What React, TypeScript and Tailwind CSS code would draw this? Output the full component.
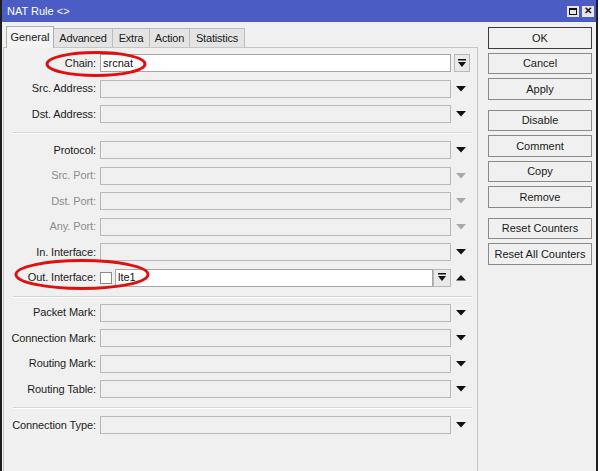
import React from "react";

const font = { fontFamily: '"Liberation Sans", Arial, sans-serif' };

type RowProps = {
  label: string;
  disabled?: boolean;
  value?: string;
  kind?: "plain" | "chain" | "out";
};

const DownArrow = ({ color = "#111" }: { color?: string }) => (
  <svg width="10" height="6" viewBox="0 0 10 6">
    <polygon points="0,0 10,0 5,5.5" fill={color} />
  </svg>
);

const UpArrow = () => (
  <svg width="10" height="6" viewBox="0 0 10 6">
    <polygon points="0,5.5 10,5.5 5,0" fill="#111" />
  </svg>
);

const PickIcon = () => (
  <svg width="8" height="9" viewBox="0 0 8 9">
    <rect x="0" y="0" width="8" height="1.5" fill="#111" />
    <polygon points="0,3 8,3 4,8" fill="#111" />
  </svg>
);

const Field = ({ label, disabled, value, kind = "plain" }: RowProps) => {
  const white = kind !== "plain";
  return (
    <div className="flex items-center h-[18px]">
      <div
        className={
          "w-[92px] text-right text-[11px] leading-none tracking-[-0.1px] " +
          (disabled ? "text-[#8d8d8d]" : "text-[#1c1c1c]")
        }
      >
        {label}:
      </div>
      <div className="ml-[4px] w-[351px] h-[18px] flex">
        {kind === "out" && (
          <div className="w-[15px] flex items-center">
            <div className="w-[12px] h-[12px] border border-[#8a8a8a] bg-white" />
          </div>
        )}
        <div
          className={
            "flex-1 h-full border flex items-center px-[2px] text-[11px] text-[#111] " +
            (white ? "bg-white border-[#a6a6a6]" : "bg-[#f0f0f0] border-[#b8b8b8]")
          }
        >
          {value}
        </div>
        {kind === "out" && (
          <div className="w-[18px] h-full border border-[#b8b8b8] bg-[#e9e9e9] flex items-center justify-center">
            <PickIcon />
          </div>
        )}
      </div>
      <div className="w-[20px] h-[18px] flex items-center justify-center">
        {kind === "chain" ? (
          <div className="ml-[2px] w-[16px] h-[18px] border border-[#b8b8b8] bg-[#e9e9e9] flex items-center justify-center">
            <PickIcon />
          </div>
        ) : kind === "out" ? (
          <UpArrow />
        ) : (
          <DownArrow color={disabled ? "#a8a8a8" : "#111"} />
        )}
      </div>
    </div>
  );
};

const Separator = () => (
  <div className="ml-[9px] mr-[5px] h-[2px] border-t border-[#d4d4d4] border-b border-b-white" />
);

const Btn = ({ children, def }: { children: React.ReactNode; def?: boolean }) => (
  <div
    className={
      "h-[21.5px] flex items-center justify-center text-[11px] text-[#1a1a1a] bg-[#f0f0f0] border " +
      (def ? "border-[#3c3c3c]" : "border-[#8a8a8a]")
    }
  >
    {children}
  </div>
);

const tabs = [
  { name: "Advanced", w: "w-[59px]" },
  { name: "Extra", w: "w-[37px]" },
  { name: "Action", w: "w-[40px]" },
  { name: "Statistics", w: "w-[55px]" },
];

export default function App() {
  return (
    <div className="w-[600px] h-[471px] bg-white relative overflow-hidden" style={font}>
      <div className="w-[598px] h-[471px] flex flex-col bg-[#f0f0f0] border-l-2 border-r-2 border-[#1e1e1e]">
        {/* title bar */}
        <div className="h-[22px] bg-[#4b5dc4] flex items-center pl-[5px] pr-[2px]">
          <span className="text-white text-[11px]">NAT Rule &lt;&gt;</span>
          <div className="ml-auto flex gap-[3px]">
            <div className="w-[12px] h-[11px] bg-[#e6e6e6] flex items-center justify-center">
              <div className="w-[8px] h-[7px] border border-[#111] border-t-2" />
            </div>
            <div className="w-[12px] h-[11px] bg-[#e6e6e6] flex items-center justify-center text-[10px] font-bold text-[#111] leading-none">
              ✕
            </div>
          </div>
        </div>

        <div className="flex flex-1">
          {/* left column */}
          <div className="w-[477px] flex flex-col">
            <div className="flex items-end pl-[4px] pt-[3px] h-[25px]">
              <div className="h-[22px] w-[48px] bg-[#f4f4f4] border border-b-0 border-[#b0b0b0] flex items-center justify-center text-[11px] text-[#1a1a1a] relative top-[1px]">
                General
              </div>
              {tabs.map((t) => (
                <div
                  key={t.name}
                  className={
                    "h-[19px] bg-[#e4e4e4] border border-l-0 border-b-0 border-[#bcbcbc] flex items-center justify-center text-[11px] text-[#1a1a1a] tracking-[-0.2px] " +
                    t.w
                  }
                >
                  {t.name}
                </div>
              ))}
            </div>
            <div className="flex-1 ml-[1px] mr-[1px] border-t border-l border-r border-[#c6c6c6] pt-[6px] flex flex-col">
              <div className="flex flex-col gap-[7.5px]">
                <Field label="Chain" kind="chain" value="srcnat" />
                <Field label="Src. Address" />
                <Field label="Dst. Address" />
              </div>
              <div className="mt-[9px] mb-[7px]">
                <Separator />
              </div>
              <div className="flex flex-col gap-[7.5px]">
                <Field label="Protocol" />
                <Field label="Src. Port" disabled />
                <Field label="Dst. Port" disabled />
                <Field label="Any. Port" disabled />
                <Field label="In. Interface" />
                <Field label="Out. Interface" kind="out" value="lte1" />
              </div>
              <div className="mt-[9px] mb-[6px]">
                <Separator />
              </div>
              <div className="flex flex-col gap-[7.5px]">
                <Field label="Packet Mark" />
                <Field label="Connection Mark" />
                <Field label="Routing Mark" />
                <Field label="Routing Table" />
              </div>
              <div className="mt-[9px] mb-[7px]">
                <Separator />
              </div>
              <Field label="Connection Type" />
            </div>
          </div>

          {/* buttons */}
          <div className="w-[104px] ml-[9px] pt-[5px] flex flex-col">
            <div className="flex flex-col gap-[4px]">
              <Btn def>OK</Btn>
              <Btn>Cancel</Btn>
              <Btn>Apply</Btn>
            </div>
            <div className="flex flex-col gap-[4px] mt-[10px]">
              <Btn>Disable</Btn>
              <Btn>Comment</Btn>
              <Btn>Copy</Btn>
              <Btn>Remove</Btn>
            </div>
            <div className="flex flex-col gap-[4px] mt-[10px]">
              <Btn>Reset Counters</Btn>
              <Btn>Reset All Counters</Btn>
            </div>
          </div>
        </div>
      </div>

      {/* red annotation ellipses */}
      <svg className="absolute left-0 top-0 pointer-events-none" width="600" height="471">
        <ellipse cx="96" cy="64" rx="49" ry="11.5" fill="none" stroke="#e01010" strokeWidth="3" />
        <ellipse cx="82" cy="274.5" rx="66" ry="14" fill="none" stroke="#e01010" strokeWidth="3" />
      </svg>
    </div>
  );
}
